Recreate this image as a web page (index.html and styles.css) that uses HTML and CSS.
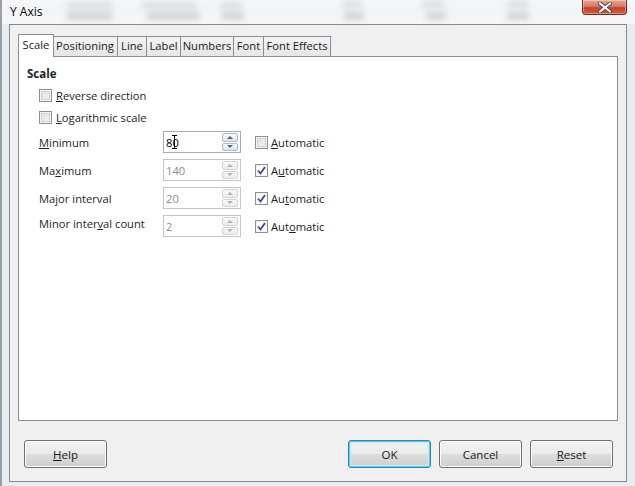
FILE: index.html
```html
<!DOCTYPE html>
<html>
<head>
<meta charset="utf-8">
<title>Y Axis</title>
<link rel="stylesheet" href="styles.css">
</head>
<body>
<div class="screen">
  <div class="titlebar">
    <span class="title">Y Axis</span>
    <button class="close" aria-label="Close">
      <svg width="14" height="11" viewBox="0 0 14 11"><path d="M2 1.5 L12 9.5 M12 1.5 L2 9.5" stroke="#4a4a4a" stroke-width="4" stroke-linecap="round"/><path d="M2 1.5 L12 9.5 M12 1.5 L2 9.5" stroke="#ffffff" stroke-width="2.2" stroke-linecap="round"/></svg>
    </button>
  </div>
  <div class="frame">
    <div class="client">
      <div class="tabs">
        <div class="tab active w-scale">Scale</div>
        <div class="tab w-pos">Positioning</div>
        <div class="tab w-line">Line</div>
        <div class="tab w-label">Label</div>
        <div class="tab w-num">Numbers</div>
        <div class="tab w-font">Font</div>
        <div class="tab w-fx">Font Effects</div>
      </div>
      <div class="panel">
        <div class="heading">Scale</div>
        <label class="check-row">
          <span class="cb"></span><span><u>R</u>everse direction</span>
        </label>
        <label class="check-row">
          <span class="cb"></span><span><u>L</u>ogarithmic scale</span>
        </label>
        <div class="spin-row">
          <span class="spin-label"><u>M</u>inimum</span>
          <div class="spin">
            <span class="value">80</span>
            <span class="ibeam"></span>
            <div class="arrows"><span class="up"></span><span class="down"></span></div>
          </div>
          <span class="cb auto-cb"></span><span><u>A</u>utomatic</span>
        </div>
        <div class="spin-row">
          <span class="spin-label">Ma<u>x</u>imum</span>
          <div class="spin disabled">
            <span class="value">140</span>
            <div class="arrows"><span class="up"></span><span class="down"></span></div>
          </div>
          <span class="cb auto-cb checked"><svg width="9" height="9" viewBox="0 0 9 9"><path d="M1 4.5 L3.5 7.5 L8 1" fill="none" stroke="#3b4f82" stroke-width="1.8"/></svg></span><span>A<u>u</u>tomatic</span>
        </div>
        <div class="spin-row">
          <span class="spin-label">Major interval</span>
          <div class="spin disabled">
            <span class="value">20</span>
            <div class="arrows"><span class="up"></span><span class="down"></span></div>
          </div>
          <span class="cb auto-cb checked"><svg width="9" height="9" viewBox="0 0 9 9"><path d="M1 4.5 L3.5 7.5 L8 1" fill="none" stroke="#3b4f82" stroke-width="1.8"/></svg></span><span>Au<u>t</u>omatic</span>
        </div>
        <div class="spin-row">
          <span class="spin-label raised">Minor inter<u>v</u>al count</span>
          <div class="spin disabled">
            <span class="value">2</span>
            <div class="arrows"><span class="up"></span><span class="down"></span></div>
          </div>
          <span class="cb auto-cb checked"><svg width="9" height="9" viewBox="0 0 9 9"><path d="M1 4.5 L3.5 7.5 L8 1" fill="none" stroke="#3b4f82" stroke-width="1.8"/></svg></span><span>Aut<u>o</u>matic</span>
        </div>
      </div>
      <div class="buttons">
        <button class="btn"><u>H</u>elp</button>
        <span class="spacer"></span>
        <button class="btn default">OK</button>
        <button class="btn">Cancel</button>
        <button class="btn"><u>R</u>eset</button>
      </div>
    </div>
  </div>
</div>
</body>
</html>
```
FILE: styles.css
```css
* { box-sizing: border-box; }
body {
  margin: 0;
  width: 635px;
  height: 486px;
  overflow: hidden;
  font-family: "Open Sans", "Noto Sans", sans-serif;
  font-size: 11.2px;
  color: #1e1e1e;
  background: #e9ecef;
}
u { text-decoration: underline; text-underline-offset: 1px; }
.screen {
  height: 486px;
  display: flex;
  flex-direction: column;
  border-left: 2px solid #9aa0a6;
}
.titlebar {
  height: 24px;
  position: relative;
  display: flex;
  align-items: flex-start;
  padding: 0 8px 0 8px;
  background: #f4f6f8;
}
.titlebar::before {
  content: "";
  position: absolute;
  inset: 0;
  background:
    linear-gradient(#d3d5d7, #d3d5d7) 65px 3px / 45px 5px no-repeat,
    linear-gradient(#d3d5d7, #d3d5d7) 140px 3px / 55px 5px no-repeat,
    linear-gradient(#d3d5d7, #d3d5d7) 218px 3px / 22px 5px no-repeat,
    linear-gradient(#d3d5d7, #d3d5d7) 340px 2px / 20px 5px no-repeat,
    linear-gradient(#d3d5d7, #d3d5d7) 420px 2px / 22px 5px no-repeat,
    linear-gradient(#d3d5d7, #d3d5d7) 505px 2px / 22px 5px no-repeat,
    linear-gradient(#c8cacc, #c8cacc) 65px 13px / 45px 6px no-repeat,
    linear-gradient(#c8cacc, #c8cacc) 145px 13px / 52px 6px no-repeat,
    linear-gradient(#c8cacc, #c8cacc) 220px 13px / 22px 6px no-repeat,
    linear-gradient(#c8cacc, #c8cacc) 342px 13px / 20px 6px no-repeat,
    linear-gradient(#c8cacc, #c8cacc) 424px 13px / 20px 6px no-repeat,
    linear-gradient(#c8cacc, #c8cacc) 505px 13px / 22px 6px no-repeat,
    linear-gradient(#e6e8ea, #e6e8ea) 0 10px / 100% 1px no-repeat;
  filter: blur(3px);
}
.title {
  position: relative;
  margin-top: 3px;
  font-size: 12px;
  color: #000;
  text-shadow: 0 0 6px #fff, 0 0 3px #fff;
}
.close {
  position: relative;
  margin-left: auto;
  width: 45px;
  height: 15px;
  padding: 0;
  border: 1px solid #6e2a1e;
  border-top: none;
  border-radius: 0 0 4px 4px;
  background: linear-gradient(#e8a694 0%, #d77a62 45%, #c4442a 55%, #d35a3a 100%);
  box-shadow: inset 0 0 0 1px rgba(255,255,255,0.35);
  display: flex;
  align-items: center;
  justify-content: center;
}
.frame {
  flex: 1;
  display: flex;
  padding: 0 8px 4px 7px;
}
.client {
  flex: 1;
  display: flex;
  flex-direction: column;
  border: 1px solid #868990;
  background: #f0f0f0;
  padding: 9px 8px 0 8px;
}
.tabs {
  display: flex;
  align-items: flex-end;
  height: 22px;
}
.tab {
  height: 20px;
  border: 1px solid #898c95;
  border-bottom: none;
  background: linear-gradient(#f4f4f4, #e6e6e6);
  text-align: center;
  line-height: 18px;
  white-space: nowrap;
  color: #1a1a1a;
}
.tab + .tab { margin-left: -1px; }
.tab.active {
  position: relative;
  z-index: 1;
  height: 23px;
  margin-bottom: -1px;
  background: #fff;
  line-height: 20px;
  margin-right: -1px;
}
.w-scale { width: 36px; }
.w-pos { width: 66px; }
.w-line { width: 30px; }
.w-label { width: 35px; }
.w-num { width: 54px; }
.w-font { width: 31px; }
.w-fx { width: 68px; }
.panel {
  height: 365px;
  border: 1px solid #898c95;
  background: #fff;
  padding: 9px 8px 0 8px;
  display: flex;
  flex-direction: column;
}
.heading {
  font-weight: 700;
  font-size: 11.5px;
  height: 16px;
  line-height: 16px;
  margin-bottom: 2px;
}
.check-row {
  height: 22px;
  display: flex;
  align-items: center;
  gap: 4px;
  padding-left: 12px;
}
.cb {
  width: 13px;
  height: 13px;
  border: 1px solid #8e8f8f;
  background: linear-gradient(135deg, #dcdcdc, #f7f7f7);
  box-shadow: inset 0 0 0 1px #f4f4f4, inset 0 0 0 2px #d2d2d2;
  display: flex;
  align-items: center;
  justify-content: center;
  flex: none;
}
.cb.checked {
  background: #fbfbfb;
  box-shadow: inset 0 0 0 1px #f4f4f4;
}
.spin-row {
  height: 28px;
  display: flex;
  align-items: center;
  padding-left: 12px;
}
.spin-label {
  width: 124px;
}
.spin-label.raised { margin-top: -6px; }
.spin {
  position: relative;
  width: 78px;
  height: 22px;
  border: 1px solid #aaabad;
  background: #fff;
  display: flex;
  align-items: center;
  padding: 0 2px 0 2px;
}
.spin .value { flex: 1; color: #000; }
.spin.disabled { border-color: #c4c5c7; }
.spin.disabled .value { color: #8b8b8b; }
.ibeam {
  position: absolute;
  left: 8px;
  top: 3px;
  width: 5px;
  height: 14px;
  border-top: 1px solid #000;
  border-bottom: 1px solid #000;
  background: linear-gradient(#000, #000) center / 1px 100% no-repeat;
}
.arrows {
  width: 16px;
  height: 18px;
  display: flex;
  flex-direction: column;
  gap: 1px;
}
.arrows span {
  flex: 1;
  border: 1px solid #b6b9be;
  border-radius: 2px;
  background: linear-gradient(#f6f7f9, #dfe3e8);
  display: flex;
  align-items: center;
  justify-content: center;
}
.arrows span::after {
  content: "";
  width: 0;
  height: 0;
  border-left: 3px solid transparent;
  border-right: 3px solid transparent;
}
.arrows .up::after { border-bottom: 3px solid #4d6391; }
.arrows .down::after { border-top: 3px solid #4d6391; }
.spin.disabled .arrows span { border-color: #d3d4d6; background: linear-gradient(#f8f8f8, #ececec); }
.spin.disabled .arrows .up::after { border-bottom-color: #b4b4b4; }
.spin.disabled .arrows .down::after { border-top-color: #b4b4b4; }
.auto-cb { margin-left: 14px; margin-right: 3px; }
.buttons {
  display: flex;
  gap: 8px;
  margin-top: 19px;
  padding: 0 5px 0 6px;
}
.spacer { flex: 1; }
.btn {
  width: 83px;
  height: 28px;
  font-family: inherit;
  font-size: 11.5px;
  color: #1a1a1a;
  border: 1px solid #707070;
  border-radius: 3px;
  background: linear-gradient(#f2f2f2 0%, #ebebeb 50%, #dddddd 51%, #cfcfcf 100%);
  box-shadow: inset 0 0 0 1px #fcfcfc;
  padding: 0;
}
.btn.default {
  border-color: #3c7fb1;
  box-shadow: inset 0 0 0 1px #48d4f5, inset 0 0 0 2px #c5eefb;
}
```
